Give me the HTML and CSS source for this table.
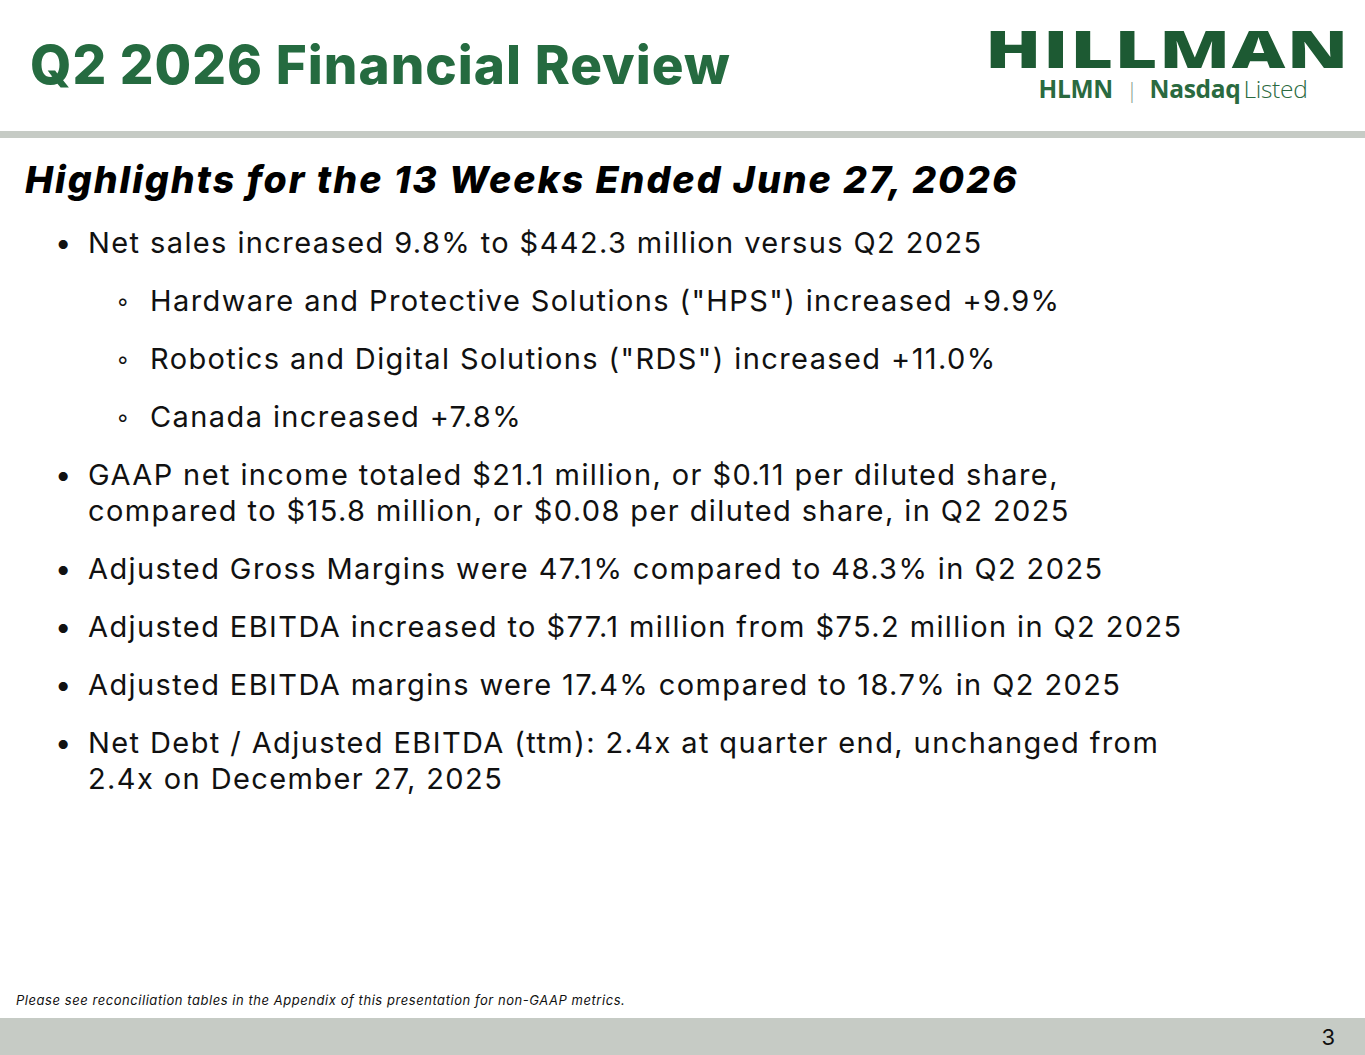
FILE: index.html
```html
<!DOCTYPE html>
<html lang="en">
<head>
<meta charset="utf-8">
<title>Q2 2026 Financial Review</title>
<link rel="stylesheet" href="styles.css">
</head>
<body>
<div class="slide">
  <header class="header">
    <h1 class="title">Q2 2026 Financial Review</h1>
    <div class="logo">
      <div class="logo-word">HILLMAN</div>
      <div class="logo-sub"><span class="b">HLMN</span><span class="sep">|</span><span class="b">Nasdaq</span><span class="l">Listed</span></div>
    </div>
  </header>
  <div class="rule"></div>
  <main class="content">
    <h2 class="subtitle">Highlights for the 13 Weeks Ended June 27, 2026</h2>
    <ul class="bullets">
      <li>Net sales increased 9.8% to $442.3 million versus Q2 2025
        <ul class="sub">
          <li>Hardware and Protective Solutions ("HPS") increased +9.9%</li>
          <li>Robotics and Digital Solutions ("RDS") increased +11.0%</li>
          <li>Canada increased +7.8%</li>
        </ul>
      </li>
      <li>GAAP net income totaled $21.1 million, or $0.11 per diluted share,<br>compared to $15.8 million, or $0.08 per diluted share, in Q2 2025</li>
      <li>Adjusted Gross Margins were 47.1% compared to 48.3% in Q2 2025</li>
      <li>Adjusted EBITDA increased to $77.1 million from $75.2 million in Q2 2025</li>
      <li>Adjusted EBITDA margins were 17.4% compared to 18.7% in Q2 2025</li>
      <li>Net Debt / Adjusted EBITDA (ttm): 2.4x at quarter end, unchanged from<br>2.4x on December 27, 2025</li>
    </ul>
  </main>
  <p class="note">Please see reconciliation tables in the Appendix of this presentation for non-GAAP metrics.</p>
  <footer class="bar"><span class="page">3</span></footer>
</div>
</body>
</html>
```
FILE: styles.css
```css
* { box-sizing: border-box; }
html, body { margin: 0; padding: 0; background: #fff; }
body { font-family: Inter, "Open Sans", "Liberation Sans", sans-serif; color: #111; }
.slide { width: 1365px; height: 1055px; display: flex; flex-direction: column; overflow: hidden; }
.header { height: 131px; display: flex; justify-content: space-between; align-items: flex-start; padding: 0 18px 0 30px; }
.title { margin: 0; padding-top: 30px; font-family: Inter, sans-serif; font-size: 53px; font-weight: 800; color: #256b40; line-height: 70px; letter-spacing: 1px; }
.logo { display: flex; flex-direction: column; align-items: center; padding-top: 25px; width: 360px; }
.logo-word { font-family: "Open Sans", sans-serif; font-weight: 800; font-size: 52px; line-height: 46px; color: #1d5a33; transform: scaleX(1.42); letter-spacing: 1px; }
.logo-sub { margin-top: 4px; padding-left: 12px; font-family: "Open Sans", sans-serif; font-size: 24.5px; line-height: 28px; color: #2a6a40; display: flex; align-items: center; letter-spacing: -0.3px; }
.logo-sub .b { font-weight: 700; }
.logo-sub .sep { font-weight: 300; color: #7f9c88; margin: 0 12px 0 13px; font-size: 22px; }
.logo-sub .l { font-weight: 300; margin-left: 3px; }
.rule { height: 7px; background: #c6cbc5; }
.content { flex: 1; padding: 14px 0 0 25px; }
.subtitle { margin: 0; font-size: 37.5px; font-weight: 800; font-style: italic; line-height: 56px; color: #000; letter-spacing: 2px; }
.bullets { list-style: none; margin: 17px 0 0; padding: 0 0 0 37px; font-size: 29px; line-height: 36px; color: #111; letter-spacing: 1.4px; }
.bullets > li { position: relative; padding-left: 26px; margin-bottom: 22px; }
.bullets > li::before { content: "•"; position: absolute; left: -7px; top: 0; }
.sub { list-style: none; margin: 22px 0 0; padding: 0 0 0 62px; }
.sub > li { position: relative; margin-bottom: 22px; }
.sub > li:last-child { margin-bottom: 0; }
.sub > li::before { content: "◦"; position: absolute; left: -34px; top: 0; font-size: 24px; }
.note { margin: 0 0 10px 16px; font-size: 13px; font-style: italic; color: #111; line-height: 16px; letter-spacing: 0.55px; }
.bar { height: 37px; background: #c6cbc5; display: flex; justify-content: flex-end; align-items: center; padding-right: 30px; }
.page { font-size: 22px; color: #111; }
```
